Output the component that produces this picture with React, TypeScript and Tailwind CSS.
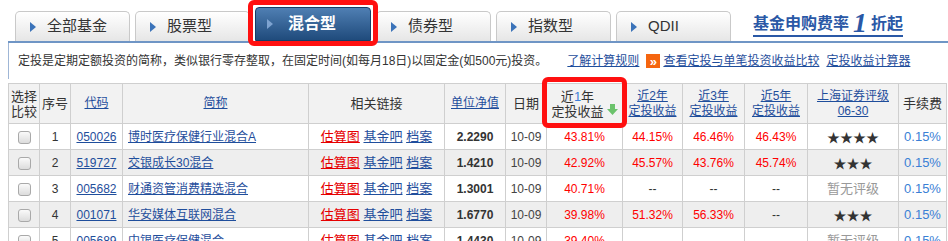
import React from "react";

const tabs = ["全部基金", "股票型", "混合型", "债券型", "指数型", "QDII"];

type Row = {
  no: number;
  code: string;
  name: string;
  nav: string;
  y1: string;
  y2: string;
  y3: string;
  y5: string;
  stars: number;
};

const rows: Row[] = [
  { no: 1, code: "050026", name: "博时医疗保健行业混合A", nav: "2.2290", y1: "43.81%", y2: "44.15%", y3: "46.46%", y5: "46.43%", stars: 4 },
  { no: 2, code: "519727", name: "交银成长30混合", nav: "1.4210", y1: "42.92%", y2: "45.57%", y3: "43.76%", y5: "45.74%", stars: 3 },
  { no: 3, code: "005682", name: "财通资管消费精选混合", nav: "1.3001", y1: "40.71%", y2: "--", y3: "--", y5: "--", stars: 0 },
  { no: 4, code: "001071", name: "华安媒体互联网混合", nav: "1.6770", y1: "39.98%", y2: "51.32%", y3: "56.33%", y5: "--", stars: 3 },
  { no: 5, code: "005689", name: "中银医疗保健混合", nav: "1.4430", y1: "39.40%", y2: "--", y3: "--", y5: "--", stars: 0 },
];

const widths = [31, 31, 52, 186, 136, 61, 41, 76, 60, 62, 63, 91, 48];

function Tab({ label, active }: { label: string; active: boolean }) {
  if (active) {
    return (
      <div className="w-[116px] h-[34px] flex items-center pl-[11px] rounded-t-[4px] border border-[#163c66] bg-gradient-to-b from-[#4f7fb3] to-[#1f4b7c]">
        <span className="border-y-[5px] border-y-transparent border-l-[6px] border-l-[#7ea3d0]" />
        <span className="ml-[15px] text-[16px] font-bold text-white">{label}</span>
      </div>
    );
  }
  return (
    <div className="w-[115px] h-[30px] flex items-center pl-[14px] rounded-t-[5px] border border-b-0 border-[#c9c9c9] bg-gradient-to-b from-white to-[#e6e6e6]">
      <span className="border-y-[5px] border-y-transparent border-l-[6px] border-l-[#3b73b9]" />
      <span className="ml-[11px] text-[15px] text-[#333]">{label}</span>
    </div>
  );
}

function Checkbox() {
  return (
    <span className="inline-block w-[13px] h-[13px] rounded-[3px] border border-[#a9a9a9] bg-gradient-to-b from-[#fafafa] to-[#dcdcdc] align-middle" />
  );
}

function Link({ children, red }: { children: React.ReactNode; red?: boolean }) {
  return <a className={red ? "underline text-[#e60000]" : "underline text-[#1f4e9c]"}>{children}</a>;
}

export default function App() {
  return (
    <div className="relative w-[948px] h-[241px] overflow-hidden bg-white text-[12px] text-[#333] font-['Liberation_Sans','Noto_Sans_CJK_SC',sans-serif]">
      {/* tabs */}
      <div className="h-[41px] flex items-end pl-[15px] gap-[5px]">
        {tabs.map((t) => (
          <Tab key={t} label={t} active={t === "混合型"} />
        ))}
        <div className="ml-[17px] self-start mt-[12px] flex items-end border-b-2 border-[#2a58a6] pb-[1px] text-[#2a58a6] font-bold text-[16px] leading-[20px]">
          基金申购费率
          <span className="mx-[4px] font-['Liberation_Serif',serif] italic text-[28px] leading-[22px]">1</span>
          折起
        </div>
      </div>
      <div className="h-[2px] ml-[8px] bg-[#6f95c5]" />

      {/* info line */}
      <div className="ml-[8px] h-[36px] border-l border-[#9fb6d6] flex items-center pl-[9px]">
        <span>定投是定期定额投资的简称，类似银行零存整取，在固定时间(如每月18日)以固定金(如500元)投资。</span>
        <span className="ml-[20px]">
          <Link>了解计算规则</Link>
        </span>
        <span className="ml-[7px] w-[14px] h-[14px] bg-[#f5650f] text-white text-[13px] leading-[13px] font-bold flex items-center justify-center">»</span>
        <span className="ml-[3px]">
          <Link>查看定投与单笔投资收益比较</Link>
        </span>
        <span className="ml-[7px]">
          <Link>定投收益计算器</Link>
        </span>
      </div>

      {/* table */}
      <table className="mt-[4px] ml-[8px] w-[939px] table-fixed border-collapse text-center">
        <colgroup>
          {widths.map((w, i) => (
            <col key={i} style={{ width: w }} />
          ))}
        </colgroup>
        <thead>
          <tr className="h-[40px] bg-[#f2f2f2] leading-[15px]">
            <th className="border border-[#cfcfcf] font-normal text-[13px] leading-[15px]">选择<br />比较</th>
            <th className="border border-[#cfcfcf] font-normal text-[13px]">序号</th>
            <th className="border border-[#cfcfcf] font-normal"><Link>代码</Link></th>
            <th className="border border-[#cfcfcf] font-normal"><Link>简称</Link></th>
            <th className="border border-[#cfcfcf] font-normal text-[13px]">相关链接</th>
            <th className="border border-[#cfcfcf] font-normal"><Link>单位净值</Link></th>
            <th className="border border-[#cfcfcf] font-normal text-[13px]">日期</th>
            <th className="border border-[#cfcfcf] font-normal">
              <span className="inline-flex items-end">
                <span className="text-[13px] leading-[15px]">
                  近<span className="text-[#3b7dd8]">1</span>年<br />定投收益
                </span>
                <svg width="11" height="11" viewBox="0 0 11 11" className="ml-[3px] mb-[4px]">
                  <path d="M3 0h5v5h3l-5.5 6L0 5h3z" fill="#6cc36c" />
                </svg>
              </span>
            </th>
            <th className="border border-[#cfcfcf] font-normal"><Link>近2年<br />定投收益</Link></th>
            <th className="border border-[#cfcfcf] font-normal"><Link>近3年<br />定投收益</Link></th>
            <th className="border border-[#cfcfcf] font-normal"><Link>近5年<br />定投收益</Link></th>
            <th className="border border-[#cfcfcf] font-normal"><Link>上海证券评级<br />06-30</Link></th>
            <th className="border border-[#cfcfcf] font-normal text-[13px]">手续费</th>
          </tr>
        </thead>
        <tbody>
          {rows.map((r, i) => (
            <tr key={r.code} className={i % 2 === 1 ? "h-[26px] bg-[#eeeeee]" : "h-[26px] bg-white"}>
              <td className="border border-[#cfcfcf]"><Checkbox /></td>
              <td className="border border-[#cfcfcf]">{r.no}</td>
              <td className="border border-[#cfcfcf]"><Link>{r.code}</Link></td>
              <td className="border border-[#cfcfcf] text-left pl-[5px]"><Link>{r.name}</Link></td>
              <td className="border border-[#cfcfcf] text-[13px]">
                <Link red>估算图</Link> <Link>基金吧</Link> <Link>档案</Link>
              </td>
              <td className="border border-[#cfcfcf] font-bold text-[#333]">{r.nav}</td>
              <td className="border border-[#cfcfcf] text-[#444]">10-09</td>
              <td className="border border-[#cfcfcf] text-[#f00]">{r.y1}</td>
              <td className={r.y2 === "--" ? "border border-[#cfcfcf]" : "border border-[#cfcfcf] text-[#f00]"}>{r.y2}</td>
              <td className={r.y3 === "--" ? "border border-[#cfcfcf]" : "border border-[#cfcfcf] text-[#f00]"}>{r.y3}</td>
              <td className={r.y5 === "--" ? "border border-[#cfcfcf]" : "border border-[#cfcfcf] text-[#f00]"}>{r.y5}</td>
              <td className="border border-[#cfcfcf]">
                {r.stars > 0 ? (
                  <span className="text-[13px] text-[#333] font-['Noto_Sans_CJK_SC',sans-serif]">{"★".repeat(r.stars)}</span>
                ) : (
                  <span className="text-[13px] text-[#999]">暂无评级</span>
                )}
              </td>
              <td className="border border-[#cfcfcf] text-[13px] text-[#3a7fd5]">0.15%</td>
            </tr>
          ))}
        </tbody>
      </table>

      {/* highlight boxes */}
      <div className="absolute left-[248px] top-0 w-[130px] h-[46px] border-[5px] border-[#ff1010] rounded-[6px]" />
      <div className="absolute left-[542px] top-[77px] w-[85px] h-[51px] border-[5px] border-[#ff1010] rounded-[6px]" />
    </div>
  );
}
